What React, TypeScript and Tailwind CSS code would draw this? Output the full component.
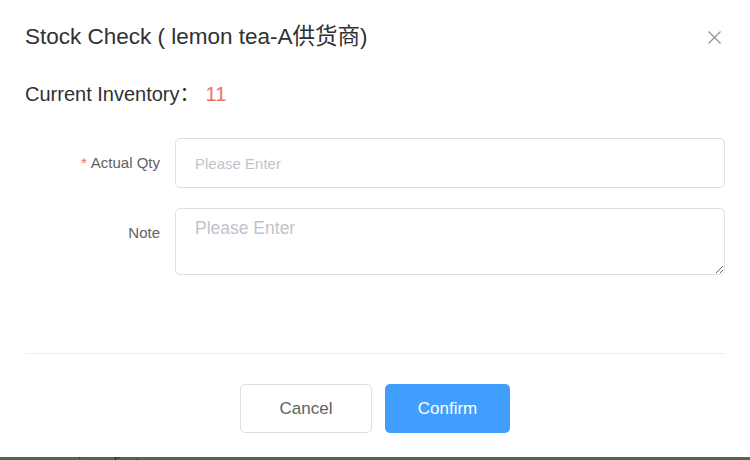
const font = { fontFamily: '"Liberation Sans", Arial, "Noto Sans CJK SC", sans-serif' };

function FormRow({ label, required, children }: { label: string; required?: boolean; children: React.ReactNode }) {
  return (
    <div className="flex items-start">
      <div className="w-[150px] shrink-0 pr-[15px] h-[50px] leading-[50px] text-right text-[15px] text-[#606266]">
        {required && <span className="text-[#f56c6c] mr-1">*</span>}
        {label}
      </div>
      <div className="flex-1 min-w-0">{children}</div>
    </div>
  );
}

export default function App() {
  return (
    <div className="w-[750px] h-[460px] flex flex-col bg-[#5e5e5e] overflow-hidden" style={font}>
      <div className="h-[457px] bg-white flex flex-col px-[25px]">
        <div className="pt-6 flex items-center justify-between">
          <h2 className="text-[22.5px] leading-[26px] text-[#303133]">Stock Check ( lemon tea-A供货商)</h2>
          <button className="mr-[4px] text-[#909399]">
            <svg width="13" height="13" viewBox="0 0 13 13" fill="none" stroke="currentColor" strokeWidth="1.2">
              <path d="M0.5 0.5L12.5 12.5M12.5 0.5L0.5 12.5" />
            </svg>
          </button>
        </div>

        <div className="mt-[31px] flex items-center text-[20px] leading-[26px] text-[#303133]">
          <span>Current Inventory：</span>
          <span className="ml-[6px] text-[#f56c6c]">11</span>
        </div>

        <div className="mt-[31px] flex flex-col gap-[20px]">
          <FormRow label="Actual Qty" required>
            <input
              className="w-full h-[50px] border border-[#dcdfe6] rounded-[5px] px-[19px] text-[15px] text-[#606266] outline-none placeholder:text-[#c0c4cc]"
              placeholder="Please Enter"
            />
          </FormRow>
          <FormRow label="Note">
            <textarea
              className="block w-full h-[67px] border border-[#dcdfe6] rounded-[5px] px-[19px] py-[7px] text-[17.5px] leading-[24px] text-[#606266] outline-none placeholder:text-[#c0c4cc]"
              placeholder="Please Enter"
            />
          </FormRow>
        </div>

        <div className="mt-[78px] border-t border-[#ebeef5]" />

        <div className="mt-[30px] flex justify-center gap-[13px]">
          <button className="w-[132px] h-[49px] border border-[#dcdfe6] rounded-[5px] bg-white text-[17px] text-[#606266]">
            Cancel
          </button>
          <button className="w-[125px] h-[49px] rounded-[5px] bg-[#409eff] text-[17px] text-white">
            Confirm
          </button>
        </div>
      </div>
      <div className="h-[3px] overflow-hidden relative">
        <span className="absolute left-[78px] -top-[1px] text-[14px] leading-none text-[#222]">ingredients</span>
      </div>
    </div>
  );
}
